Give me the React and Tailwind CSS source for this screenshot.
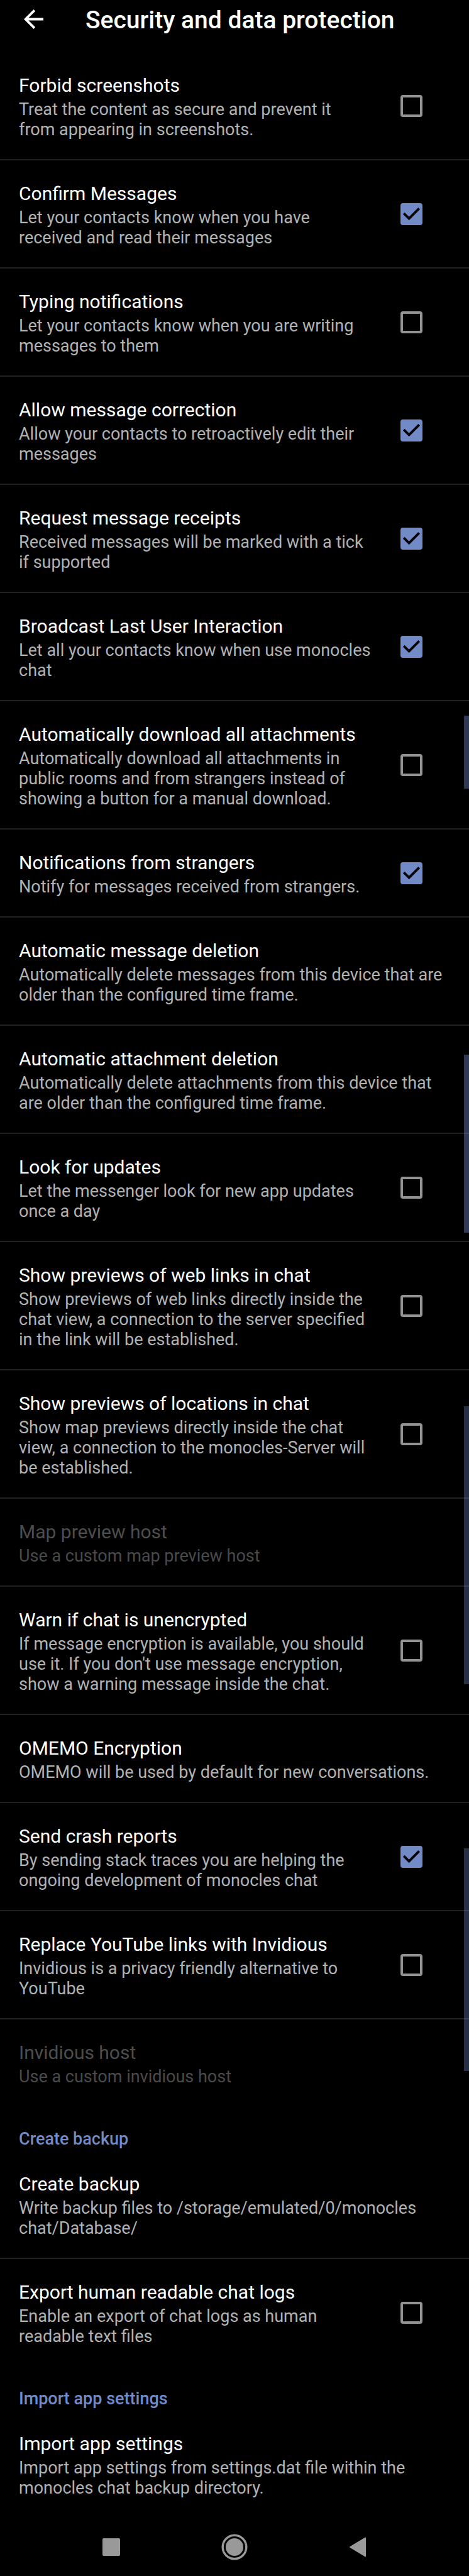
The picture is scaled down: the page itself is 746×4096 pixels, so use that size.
import { useState } from "react";

const privacySettings = [
  { title: "Forbid screenshots", summary: "Treat the content as secure and prevent it from\u00a0appearing in screenshots.", checked: false },
  { title: "Confirm Messages", summary: "Let your contacts know when you have received and read their messages", checked: true },
  { title: "Typing notifications", summary: "Let your contacts know when you are writing messages to them", checked: false },
  { title: "Allow message correction", summary: "Allow your contacts to retroactively edit their messages", checked: true },
  { title: "Request message receipts", summary: "Received messages will be marked with a tick if supported", checked: true },
  { title: "Broadcast Last User Interaction", summary: "Let all your contacts know when use monocles chat", checked: true },
  { title: "Automatically download all attachments", summary: "Automatically download all attachments in public rooms and from strangers instead of showing a button for a manual download.", checked: false },
  { title: "Notifications from strangers", summary: "Notify for messages received from strangers.", checked: true },
  { title: "Automatic message deletion", summary: "Automatically delete messages from this device that are older than the configured time frame." },
  { title: "Automatic attachment deletion", summary: "Automatically delete attachments from this device that are older than the configured time frame." },
  { title: "Look for updates", summary: "Let the messenger look for new app updates once a day", checked: false },
  { title: "Show previews of web links in chat", summary: "Show previews of web links directly inside the chat view, a connection to the server specified in the link will be established.", checked: false },
  { title: "Show previews of locations in chat", summary: "Show map previews directly inside the chat view, a connection to the monocles-Server will be established.", checked: false },
  { title: "Map preview host", summary: "Use a custom map preview host", disabled: true },
  { title: "Warn if chat is unencrypted", summary: "If message encryption is available, you should use it. If you don't use message encryption, show a warning message inside the chat.", checked: false },
  { title: "OMEMO Encryption", summary: "OMEMO will be used by default for new conversations." },
  { title: "Send crash reports", summary: "By sending stack traces you are helping the ongoing development of monocles chat", checked: true },
  { title: "Replace YouTube links with Invidious", summary: "Invidious is a privacy friendly alternative to YouTube", checked: false },
  { title: "Invidious host", summary: "Use a custom invidious host", disabled: true },
];

const backupSettings = [
  { title: "Create backup", summary: "Write backup files to /storage/emulated/0/monocles chat/Database/" },
  { title: "Export human readable chat logs", summary: "Enable an export of chat logs as human readable text files", checked: false },
];

const importSettings = [
  { title: "Import app settings", summary: "Import app settings from settings.dat file within the monocles chat backup directory." },
];

function RowText({ title, summary, disabled }) {
  return (
    <span className="block min-w-0 flex-1 pt-[35px] pb-[31px]">
      <span className={`block text-[30px] leading-9 ${disabled ? "text-[#4d4d4d]" : "text-white"}`}>{title}</span>
      <span className={`mt-1 block text-[27px] leading-8 ${disabled ? "text-[#4a4a4a]" : "text-[#b2b2b2]"}`}>{summary}</span>
    </span>
  );
}

function ToggleRow({ title, summary, checked }) {
  const [on, setOn] = useState(checked);
  return (
    <label className="flex w-full items-center gap-10 pr-[74px] pl-[30px]">
      <RowText title={title} summary={summary} />
      <span className="grid size-[35px] shrink-0">
        <input
          type="checkbox"
          checked={on}
          onChange={(e) => setOn(e.target.checked)}
          className="col-start-1 row-start-1 size-full appearance-none rounded-[4px] border-4 border-[#939393] checked:border-[#728bc7] checked:bg-[#728bc7]"
        />
        {on && (
          <svg viewBox="3 3 18 18" className="pointer-events-none col-start-1 row-start-1 size-full fill-black" aria-hidden="true">
            <path d="M10 17l-5-5 1.41-1.41L10 14.17l7.59-7.59L19 8z" />
          </svg>
        )}
      </span>
    </label>
  );
}

function LinkRow({ title, summary, disabled }) {
  return (
    <button type="button" disabled={disabled} className="flex w-full items-center px-[30px] text-left">
      <RowText title={title} summary={summary} disabled={disabled} />
    </button>
  );
}

function SettingsList({ items }) {
  return (
    <ul className="divide-y-2 divide-[#202020]">
      {items.map((item) => (
        <li key={item.title}>
          {item.checked === undefined ? <LinkRow {...item} /> : <ToggleRow {...item} />}
        </li>
      ))}
    </ul>
  );
}

function Category({ title, items }) {
  return (
    <section>
      <h2 className="px-[30px] pt-9 pb-[3px] text-[27px] leading-8 font-medium text-[#728bc7]">{title}</h2>
      <SettingsList items={items} />
    </section>
  );
}

export default function App() {
  return (
    <div className="relative min-h-screen bg-black font-[Roboto,sans-serif]">
      <header className="flex h-[83px] items-start pt-[10px] pl-[30px]">
        <button type="button" aria-label="Back" className="flex h-10 w-[46px] items-center justify-center">
          <svg viewBox="4 4 16 16" className="size-[31px] fill-white" aria-hidden="true">
            <path d="M20 11H7.83l5.59-5.59L12 4l-8 8 8 8 1.41-1.41L7.83 13H20v-2z" />
          </svg>
        </button>
        <h1 className="ml-[60px] text-[39px] leading-[44px] font-medium text-white">Security and data protection</h1>
      </header>

      <main>
        <SettingsList items={privacySettings} />
        <Category title="Create backup" items={backupSettings} />
        <Category title="Import app settings" items={importSettings} />
      </main>

      <nav className="flex h-[93px] items-center justify-center gap-[148px]" aria-label="System">
        <button type="button" aria-label="Recent apps" className="flex size-12 items-center justify-center">
          <span className="size-7 rounded-[2px] bg-[#999999]" />
        </button>
        <button type="button" aria-label="Home" className="flex size-12 items-center justify-center">
          <svg viewBox="0 0 42 42" className="size-[42px]" aria-hidden="true">
            <circle cx="21" cy="21" r="18.8" fill="none" stroke="#999999" strokeWidth="3.4" />
            <circle cx="21" cy="21" r="14" fill="#999999" />
          </svg>
        </button>
        <button type="button" aria-label="Back" className="flex size-12 items-center justify-center">
          <svg viewBox="0 0 26 32" className="h-8 w-[26px]" aria-hidden="true">
            <path d="M25 1.5v29L1 16z" fill="#999999" stroke="#999999" strokeWidth="2" strokeLinejoin="round" />
          </svg>
        </button>
      </nav>

      <div className="pointer-events-none absolute top-[1138px] right-0 h-[116px] w-2 bg-[#728bc7]/40" />
      <div className="pointer-events-none absolute top-[1677px] right-0 h-[283px] w-2 bg-[#728bc7]/42" />
      <div className="pointer-events-none absolute top-[2236px] right-0 h-[442px] w-2 bg-[#728bc7]/34" />
      <div className="pointer-events-none absolute top-[2939px] right-0 h-[354px] w-2 bg-[#728bc7]/34" />
    </div>
  );
}
